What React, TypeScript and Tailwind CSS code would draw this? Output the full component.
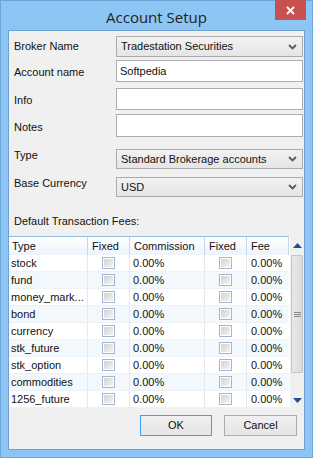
import React from 'react';

const rows = ['stock', 'fund', 'money_mark...', 'bond', 'currency', 'stk_future', 'stk_option', 'commodities', '1256_future'];

function Chevron() {
  return (
    <svg width="9" height="6" viewBox="0 0 9 6" className="shrink-0">
      <path d="M1 1 L4.5 4.5 L8 1" stroke="#5a5a5a" strokeWidth="1.8" fill="none" />
    </svg>
  );
}

function Select({ value, h }: { value: string; h: string }) {
  return (
    <div className={`flex flex-1 items-center justify-between border border-[#acacac] bg-gradient-to-b from-[#f2f2f2] to-[#e5e5e5] pl-[4px] pr-[5px] ${h}`}>
      <span>{value}</span>
      <Chevron />
    </div>
  );
}

function Input({ value, h }: { value?: string; h: string }) {
  return (
    <div className={`flex flex-1 items-center border border-[#abadb3] bg-white pl-[3px] ${h}`}>
      <span>{value}</span>
    </div>
  );
}

function Check() {
  return (
    <div className="flex h-[12px] w-[13px] items-center justify-center border border-[#a3b5cf] bg-white">
      <div className="h-[8px] w-[9px] bg-gradient-to-br from-[#d2d2d2] to-[#f4f4f4]" />
    </div>
  );
}

function Arrow({ up }: { up?: boolean }) {
  return (
    <svg width="9" height="5" viewBox="0 0 9 5">
      <path d={up ? 'M0 5 L4.5 0 L9 5 Z' : 'M0 0 L4.5 5 L9 0 Z'} fill="#1d4f98" />
    </svg>
  );
}

export default function App() {
  return (
    <div
      className="flex h-[458px] w-[313px] flex-col border border-[#6ea6d8] bg-[#8dc5f4] text-[11px] text-[#111]"
      style={{ fontFamily: '"Liberation Sans", Arial, sans-serif' }}
    >
      {/* title bar */}
      <div className="relative flex h-[29px] shrink-0 items-center justify-center">
        <span className="mt-[3px] text-[15px] text-[#222]" style={{ fontFamily: '"Open Sans", "Liberation Sans", sans-serif' }}>
          Account Setup
        </span>
        <div className="absolute right-[6px] top-[-1px] flex h-[20px] w-[31px] items-center justify-center bg-[#c75050]">
          <svg width="9" height="9" viewBox="0 0 9 9">
            <path d="M1 1 L8 8 M8 1 L1 8" stroke="#fff" strokeWidth="1.8" />
          </svg>
        </div>
      </div>

      {/* client area */}
      <div className="mx-[7px] mb-[7px] flex flex-1 flex-col border border-[#729fcf] bg-[#f0f0f0]">
        <div className="mt-[5px] flex h-[21px] items-center pr-[1px]">
          <span className="w-[107px] pl-[5px]">Broker Name</span>
          <Select value="Tradestation Securities" h="h-[21px]" />
        </div>
        <div className="mt-[3px] flex h-[22px] items-center pr-[1px]">
          <span className="w-[107px] pl-[5px] pt-[3px]">Account name</span>
          <Input value="Softpedia" h="h-[22px]" />
        </div>
        <div className="mt-[6px] flex h-[22px] items-center pr-[1px]">
          <span className="w-[107px] pl-[5px] pt-[3px]">Info</span>
          <Input h="h-[22px]" />
        </div>
        <div className="mt-[4px] flex h-[23px] items-center pr-[1px]">
          <span className="w-[107px] pl-[5px] pt-[3px]">Notes</span>
          <Input h="h-[23px]" />
        </div>
        <div className="mt-[12px] flex h-[20px] items-start pr-[1px]">
          <span className="w-[107px] pl-[5px] leading-[13px]">Type</span>
          <Select value="Standard Brokerage accounts" h="h-[20px]" />
        </div>
        <div className="mt-[8px] flex h-[20px] items-start pr-[1px]">
          <span className="w-[107px] pl-[5px] leading-[13px]">Base Currency</span>
          <Select value="USD" h="h-[20px]" />
        </div>
        <div className="mt-[18px] pl-[5px] leading-[13px]">Default Transaction Fees:</div>

        {/* grid */}
        <div className="mt-[8px] flex h-[172px] bg-white">
          <div className="flex flex-col">
            <div className="flex h-[19px] border-t border-[#8fbde9] bg-gradient-to-b from-white to-[#eef4fc]">
              <div className="flex w-[79px] items-center border-r border-[#c6d7ec] pl-[3px]">Type</div>
              <div className="flex w-[42px] items-center border-r border-[#c6d7ec] pl-[4px]">Fixed</div>
              <div className="flex w-[75px] items-center border-r border-[#c6d7ec] pl-[4px]">Commission</div>
              <div className="flex w-[42px] items-center border-r border-[#c6d7ec] pl-[4px]">Fixed</div>
              <div className="flex w-[42px] items-center border-r border-[#c6d7ec] pl-[4px]">Fee</div>
            </div>
            {rows.map((r, i) => (
              <div
                key={r}
                className={`flex h-[17px] border-b border-[#edf2f8] ${i % 2 === 1 ? 'bg-[#f3f8fd]' : 'bg-white'}`}
              >
                <div className="flex w-[79px] items-center border-r border-[#e8e8e8] pl-[2px]">{r}</div>
                <div className="flex w-[42px] items-center justify-center border-r border-[#e8e8e8]">
                  <Check />
                </div>
                <div className="flex w-[75px] items-center border-r border-[#e8e8e8] pl-[3px]">0.00%</div>
                <div className="flex w-[42px] items-center justify-center border-r border-[#e8e8e8]">
                  <Check />
                </div>
                <div className="flex w-[42px] items-center pl-[4px]">0.00%</div>
              </div>
            ))}
          </div>
          {/* scrollbar */}
          <div className="ml-[1px] flex w-[14px] flex-col bg-[#f0f0f0]">
            <div className="flex h-[19px] items-center justify-center">
              <Arrow up />
            </div>
            <div className="mx-[1px] flex h-[118px] items-center justify-center rounded-[1px] border border-[#c5c5c5] bg-gradient-to-r from-[#e8e8e8] to-[#dcdcdc]">
              <div className="flex flex-col gap-[1px]">
                <div className="h-[1px] w-[7px] bg-[#8a8a8a]" />
                <div className="h-[1px] w-[7px] bg-[#8a8a8a]" />
                <div className="h-[1px] w-[7px] bg-[#8a8a8a]" />
              </div>
            </div>
            <div className="flex flex-1 items-end justify-center pb-[5px]">
              <Arrow />
            </div>
          </div>
        </div>

        {/* buttons */}
        <div className="mt-[7px] flex justify-end gap-[12px] pr-[7px]">
          <div className="flex h-[21px] w-[72px] items-center justify-center border border-[#3c9ef5] bg-gradient-to-b from-[#f0f0f0] to-[#e5e5e5]">
            OK
          </div>
          <div className="flex h-[21px] w-[73px] items-center justify-center border border-[#acacac] bg-gradient-to-b from-[#f0f0f0] to-[#e5e5e5]">
            Cancel
          </div>
        </div>
      </div>
    </div>
  );
}
